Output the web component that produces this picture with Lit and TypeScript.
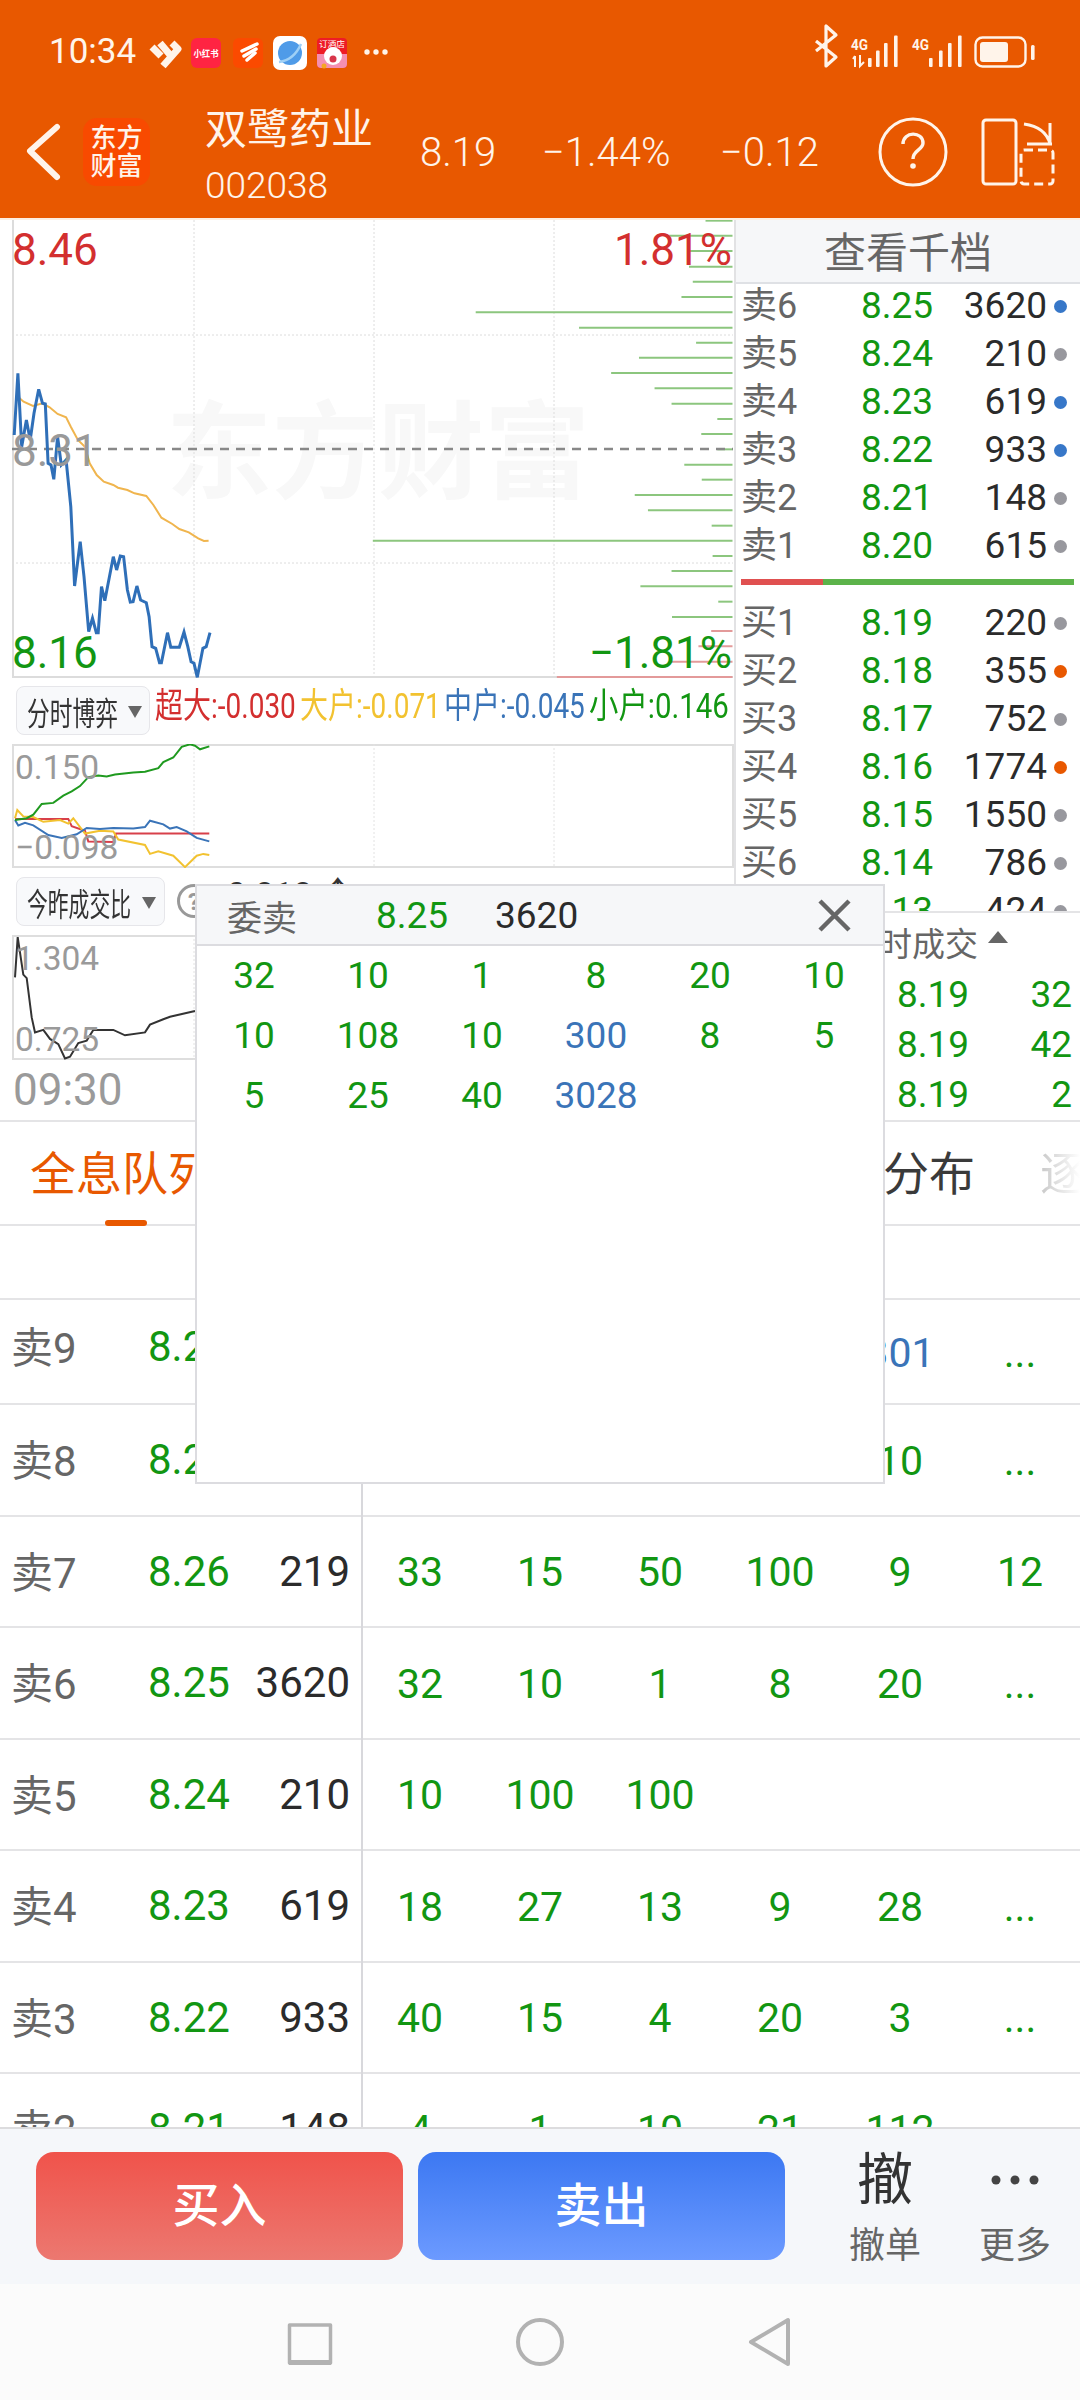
import { LitElement, html, css, svg } from "lit";
import { customElement } from "lit/decorators.js";

type Pt = [number, number];

// traced off the reference crops, each scaled into its chart's own box
const trace = (pts: Pt[], sx: number, sy: number, oy: number) =>
  pts.map(([x, y]) => `${(x / sx - 12).toFixed(1)},${(y / sy + oy).toFixed(1)}`).join(" ");

const BLUE_PRICE: Pt[] = [[30,645],[38,460],[46,680],[56,600],[64,660],[72,580],[82,508],[90,550],[96,552],[102,730],[108,735],[114,778],[122,650],[130,735],[140,720],[150,860],[158,1098],[170,965],[178,1070],[188,1235],[196,1195],[204,1238],[208,1238],[215,1100],[222,1142],[240,1010],[247,1050],[255,1008],[262,1010],[270,1110],[276,1146],[282,1145],[290,1098],[298,1140],[310,1148],[316,1190],[322,1280],[330,1285],[338,1328],[342,1328],[355,1238],[362,1282],[380,1282],[390,1236],[398,1280],[405,1325],[411,1330],[418,1372],[430,1285],[437,1280],[445,1238]];
const AVG_PRICE: Pt[] = [[38,530],[50,545],[70,558],[90,550],[105,562],[122,582],[140,592],[150,620],[165,660],[180,680],[190,730],[205,765],[220,785],[240,795],[250,803],[270,810],[285,820],[310,828],[325,855],[342,893],[365,912],[380,927],[400,937],[420,955],[432,963],[442,962]];
// [y, left edge] of the volume-at-price bars
const BARS: Pt[] = [[2,1495],[47,1418],[93,1460],[140,1460],[185,1468],[231,1444],[277,1008],[323,1227],[368,1475],[413,1354],[459,1295],[505,1387],[551,1423],[597,1520],[642,1486],[688,1520],[734,1450],[779,1487],[825,1345],[871,1373],[917,1508],[962,790],[1008,1510],[1053,1423],[1099,1357],[1145,1522],[1191,1424]];
const RED_BARS: Pt[] = [[1236,1507],[1282,1480],[1328,1420],[1374,1180]];

const FLOW_GREEN: Pt[] = [[45,420],[80,415],[100,405],[125,375],[160,372],[190,352],[215,340],[240,325],[265,300],[295,295],[320,298],[345,293],[400,287],[435,285],[475,275],[490,258],[520,245],[545,215],[570,208],[585,212],[600,222],[628,214]];
const FLOW_BLUE: Pt[] = [[45,420],[55,435],[75,428],[100,435],[145,462],[185,470],[230,460],[260,442],[300,445],[340,442],[400,444],[435,440],[450,422],[490,432],[510,444],[530,440],[560,452],[590,470],[628,480]];
const FLOW_RED: Pt[] = [[45,417],[205,417],[215,437],[255,450],[265,480],[340,482],[348,458],[628,458]];
const FLOW_YELLOW: Pt[] = [[45,415],[52,392],[70,410],[100,412],[130,425],[180,420],[205,430],[220,415],[255,458],[300,450],[340,452],[355,475],[435,490],[450,515],[475,508],[520,520],[555,552],[590,520],[610,515],[628,518]];
const RATIO: Pt[] = [[45,858],[53,745],[70,850],[80,860],[95,970],[105,1012],[130,1005],[150,1030],[175,1045],[195,1085],[210,1080],[235,1042],[260,1035],[280,1005],[340,1005],[375,1020],[435,1012],[450,990],[490,975],[510,968],[585,952]];

const SELL = [
  ["卖6", "8.25", "3620", "blue"],
  ["卖5", "8.24", "210", "gray"],
  ["卖4", "8.23", "619", "blue"],
  ["卖3", "8.22", "933", "blue"],
  ["卖2", "8.21", "148", "gray"],
  ["卖1", "8.20", "615", "gray"],
];
const BUY = [
  ["买1", "8.19", "220", "gray"],
  ["买2", "8.18", "355", "orange"],
  ["买3", "8.17", "752", "gray"],
  ["买4", "8.16", "1774", "orange"],
  ["买5", "8.15", "1550", "gray"],
  ["买6", "8.14", "786", "gray"],
  ["买7", "8.13", "424", "gray"],
];
const TRADES = [["8.19", "32"], ["8.19", "42"], ["8.19", "2"]];
const QUEUE: { l: string; p: string; v: string; q: string[] }[] = [
  { l: "卖9", p: "8.28", v: "3401", q: ["", "", "", "", "301", "..."] },
  { l: "卖8", p: "8.27", v: "512", q: ["", "", "", "", "10", "..."] },
  { l: "卖7", p: "8.26", v: "219", q: ["33", "15", "50", "100", "9", "12"] },
  { l: "卖6", p: "8.25", v: "3620", q: ["32", "10", "1", "8", "20", "..."] },
  { l: "卖5", p: "8.24", v: "210", q: ["10", "100", "100"] },
  { l: "卖4", p: "8.23", v: "619", q: ["18", "27", "13", "9", "28", "..."] },
  { l: "卖3", p: "8.22", v: "933", q: ["40", "15", "4", "20", "3", "..."] },
  { l: "卖2", p: "8.21", v: "148", q: ["4", "1", "10", "21", "112", "..."] },
];
const POPUP = ["32", "10", "1", "8", "20", "10", "10", "108", "10", "300", "8", "5", "5", "25", "40", "3028"];

@customElement("app-root")
export class AppRoot extends LitElement {
  static styles = css`
    :host {
      display: block;
      position: relative;
      width: 1080px;
      height: 2400px;
      overflow: hidden;
      background: #fff;
      font-family: Roboto, "Noto Sans CJK SC", sans-serif;
      color: #2b2b2b;
    }
    .page {
      display: flex;
      flex-direction: column;
      height: 2400px;
    }
    svg {
      display: block;
    }

    /* orange header */
    .head {
      flex: none;
      height: 218px;
      background: #e85800;
      border-bottom: 2px solid #fdeee3;
      color: #fff4ea;
    }
    .status {
      display: flex;
      align-items: center;
      height: 60px;
      padding: 22px 0 18px;
    }
    .time {
      width: 99px;
      padding-left: 49px;
      font-size: 35px;
      line-height: 60px;
    }
    .status .right {
      margin-left: auto;
    }
    .bar {
      display: flex;
      align-items: center;
      height: 104px;
    }
    .back {
      margin-left: 26px;
    }
    .logo {
      width: 67px;
      height: 68px;
      margin-left: 22px;
      border-radius: 14px;
      background: #f84a00;
      font-size: 26px;
      font-weight: 500;
      line-height: 28px;
      text-align: center;
      padding-top: 6px;
      box-sizing: border-box;
    }
    .name {
      width: 215px;
      margin-left: 55px;
      margin-top: 12px;
    }
    .name b {
      display: block;
      font-size: 42px;
      font-weight: 400;
      line-height: 56px;
    }
    .name span {
      display: block;
      font-size: 37px;
      line-height: 56px;
      font-weight: 300;
    }
    .quote {
      font-size: 40px;
      font-weight: 300;
    }
    .q1 {
      width: 122px;
    }
    .q2 {
      width: 178px;
    }
    .q3 {
      width: 157px;
    }
    .help {
      margin-left: 1px;
    }
    .flip {
      margin-left: 33px;
    }

    /* chart + order book */
    .top {
      flex: none;
      display: flex;
      height: 900px;
    }
    .left {
      width: 734px;
      flex: none;
    }
    .chart {
      margin-left: 12px;
    }
    .tool {
      display: flex;
      align-items: flex-start;
      height: 58px;
      padding: 8px 0 0 16px;
    }
    .tool.second {
      height: 58px;
      padding-top: 9px;
    }
    .pick {
      flex: none;
      display: flex;
      align-items: center;
      box-sizing: border-box;
      height: 49px;
      padding-left: 10px;
      border: 1px solid #e6e6ea;
      border-radius: 8px;
      background: #f8f9fb;
      font-size: 32px;
      color: #333;
    }
    .squeeze {
      display: inline-block;
      white-space: nowrap;
      transform-origin: left center;
    }
    .pick .squeeze {
      transform: scaleX(0.71);
    }
    .p1 {
      width: 134px;
    }
    .p1 .label {
      width: 91px;
    }
    .p2 {
      width: 149px;
    }
    .p2 .label {
      width: 105px;
    }
    .p2 .squeeze {
      transform: scaleX(0.65);
    }
    .caret {
      width: 0;
      height: 0;
      margin-left: 10px;
      margin-top: 2px;
      border-left: 7px solid transparent;
      border-right: 7px solid transparent;
      border-top: 12px solid #666;
    }
    .legend {
      display: flex;
      gap: 4.5px;
      margin-left: 5px;
      margin-top: -2px;
    }
    .legend span {
      width: 140px;
      font-size: 35px;
      line-height: 46px;
    }
    .legend .squeeze {
      transform: scaleX(0.8);
    }
    .legend .wide {
      transform: scaleX(0.84);
    }
    .red {
      color: #d32f2f;
    }
    .yellow {
      color: #f2c230;
    }
    .blue {
      color: #3a74b8;
    }
    .green {
      color: #129612;
    }
    .mark {
      margin-left: 12px;
      margin-top: 7px;
      flex: none;
    }
    .ratio {
      margin-left: 16px;
      margin-top: -1px;
      font-size: 34px;
      line-height: 36px;
      color: #333;
      white-space: nowrap;
    }
    .clock {
      padding-left: 13px;
      font-size: 44px;
      line-height: 60px;
      color: #9a9a9a;
    }

    .book {
      flex: 1;
      display: flex;
      flex-direction: column;
      min-width: 0;
      border-left: 2px solid #e2e2e4;
    }
    .book-head {
      flex: none;
      box-sizing: border-box;
      height: 64px;
      padding-top: 6px;
      background: #f6f7f9;
      border-bottom: 2px solid #dfe1e5;
      font-size: 42px;
      line-height: 56px;
      text-align: center;
      color: #666;
    }
    .orders {
      flex: 1;
      min-height: 0;
      overflow: hidden;
    }
    .order {
      display: grid;
      grid-template-columns: 120px 100px 86px 26px;
      align-items: center;
      box-sizing: border-box;
      height: 48px;
      padding: 0 0 4px 5px;
      font-size: 37px;
      line-height: 42px;
    }
    .order .l {
      font-size: 36px;
      color: #666;
    }
    .order .p {
      color: #129612;
    }
    .order .v {
      text-align: right;
    }
    .dot {
      justify-self: center;
      width: 13px;
      height: 13px;
      border-radius: 50%;
    }
    .dot.gray {
      background: #98989e;
    }
    .dot.blue {
      background: #3777c8;
    }
    .dot.orange {
      background: #e85800;
    }
    .split {
      display: flex;
      height: 6px;
      margin: 7px 6px 16px 5px;
      background: #5cb34a;
    }
    .split i {
      width: 82px;
      background: #e05050;
    }
    .trades {
      flex: none;
      height: 209px;
      box-sizing: border-box;
      border-top: 2px solid #e4e4e6;
    }
    .trades-head {
      display: flex;
      align-items: center;
      justify-content: flex-end;
      height: 57px;
      padding-right: 102px;
      font-size: 33px;
      color: #666;
      position: relative;
    }
    .trades-head i {
      position: absolute;
      right: 72px;
      top: 18px;
      width: 0;
      height: 0;
      border-left: 10px solid transparent;
      border-right: 10px solid transparent;
      border-bottom: 12px solid #666;
    }
    .trade {
      display: flex;
      justify-content: space-between;
      height: 50px;
      padding: 0 8px 0 161px;
      font-size: 37px;
      line-height: 50px;
      color: #129612;
    }

    /* tabs */
    .tabs {
      flex: none;
      display: flex;
      gap: 65px;
      box-sizing: border-box;
      height: 106px;
      padding-left: 30px;
      border-top: 2px solid #e4e4e6;
      border-bottom: 2px solid #e4e4e6;
      font-size: 46px;
      line-height: 104px;
      color: #3a3a3a;
      white-space: nowrap;
    }
    .tab {
      position: relative;
      flex: none;
    }
    .tab.on {
      color: #e85800;
      margin-right: 512px;
    }
    .tab.on::after {
      content: "";
      position: absolute;
      left: 75px;
      bottom: -2px;
      width: 42px;
      height: 6px;
      border-radius: 3px;
      background: #e85800;
    }
    .tab.fade {
      background: linear-gradient(90deg, #c8c8c8, #fff 40px);
      -webkit-background-clip: text;
      background-clip: text;
      color: transparent;
    }

    /* queue table */
    .table {
      flex: 1;
      min-height: 0;
      overflow: hidden;
    }
    .thead {
      height: 72px;
      border-bottom: 2px solid #e4e4e6;
    }
    .row {
      display: grid;
      grid-template-columns: 137px 100px 102px 11px 720px;
      align-items: center;
      box-sizing: border-box;
      height: 111.5px;
      padding-left: 11px;
      border-bottom: 2px solid #e4e4e6;
      font-size: 41px;
    }
    .row.first {
      height: 105px;
    }
    .row.first > span {
      position: relative;
      top: -5px;
    }
    .row .l {
      position: relative;
      top: -2px;
      font-size: 42px;
      color: #666;
    }
    .row.first .l {
      top: -7px;
    }
    .row .p {
      font-size: 42px;
      color: #129612;
    }
    .row .v {
      font-size: 42px;
      text-align: right;
    }
    .queue {
      grid-column: 5;
      align-self: stretch;
      display: grid;
      grid-template-columns: repeat(6, 120px);
      align-items: center;
      margin-bottom: -2px;
      border-left: 2px solid #d8d8dc;
      text-align: center;
      color: #129612;
      text-indent: -6px;
    }
    .queue .big,
    .cells .big {
      color: #3a74b8;
    }

    /* trade buttons */
    .actions {
      flex: none;
      display: flex;
      box-sizing: border-box;
      height: 157px;
      padding: 23px 0 0 36px;
      border-top: 2px solid #dcdcde;
      background: #f5f7fa;
    }
    .btn {
      flex: none;
      width: 367px;
      height: 108px;
      margin-right: 15px;
      border-radius: 18px;
      font-size: 47px;
      font-weight: 500;
      line-height: 108px;
      text-align: center;
      color: #fff;
    }
    .buy {
      background: linear-gradient(#f0534b, #ec7870);
    }
    .sell {
      background: linear-gradient(#3c78f2, #6c9aff);
    }
    .cmd {
      flex: none;
      width: 130px;
      margin-top: -21px;
      text-align: center;
      font-size: 36px;
      line-height: 34px;
      color: #666;
    }
    .cmd.undo {
      margin-left: 20px;
    }
    .cmd b,
    .cmd .more {
      display: flex;
      align-items: center;
      justify-content: center;
      height: 98px;
      font-size: 56px;
      font-weight: 400;
      color: #333;
    }

    /* android nav */
    .nav {
      flex: none;
      display: flex;
      align-items: center;
      justify-content: center;
      gap: 170px;
      height: 116px;
      background: #fbfbfb;
    }

    /* volume detail popup */
    .popup {
      position: absolute;
      left: 195px;
      top: 884px;
      width: 690px;
      height: 600px;
      box-sizing: border-box;
      border: 2px solid #dcdce0;
      background: #fff;
      font-size: 37px;
    }
    .popup-head {
      display: grid;
      grid-template-columns: 149px 119px 1fr auto;
      align-items: center;
      box-sizing: border-box;
      height: 60px;
      padding: 0 32px 0 30px;
      background: #f6f7f9;
      border-bottom: 2px solid #dcdce0;
    }
    .popup-head .l {
      font-size: 35px;
      color: #666;
    }
    .popup-head .p {
      color: #129612;
    }
    .cells {
      display: grid;
      grid-template-columns: repeat(6, 114px);
      grid-auto-rows: 60px;
      align-items: center;
      margin-top: -1px;
      text-align: center;
      color: #129612;
    }
  `;

  private chart1() {
    const sx = 2.119;
    return html`<svg class="chart" width="723" height="458" viewBox="0 0 723 458">
      <text x="154" y="270" font-size="106" font-weight="700" fill="#f8f8f8" textLength="424">东方财富</text>
      <g stroke="#dcdcdc" stroke-width="1" stroke-dasharray="2 2">
        <line x1="0" x2="721" y1="115" y2="115"></line>
        <line x1="0" x2="721" y1="343" y2="343"></line>
        <line x1="182" x2="182" y1="0" y2="458"></line>
        <line x1="362" x2="362" y1="0" y2="458"></line>
        <line x1="542" x2="542" y1="0" y2="458"></line>
      </g>
      <path d="M1 0V457H721" fill="none" stroke="#dcdcdc" stroke-width="2"></path>
      ${BARS.map(
        ([y, x]) => svg`<line x1=${x / sx - 12} x2="720.5" y1=${y / 3} y2=${y / 3} stroke="#8cc67e" stroke-width="2"></line>`
      )}
      ${RED_BARS.map(
        ([y, x]) => svg`<line x1=${x / sx - 12} x2="720.5" y1=${y / 3 - 1} y2=${y / 3 - 1} stroke="#e39a9a" stroke-width="2"></line>`
      )}
      <line x1="0" x2="721" y1="229" y2="229" stroke="#888" stroke-width="2.5" stroke-dasharray="9 7"></line>
      <polyline points=${trace(AVG_PRICE, sx, 3, 0)} fill="none" stroke="#f0b54e" stroke-width="2"></polyline>
      <polyline points=${trace(BLUE_PRICE, sx, 3, 0)} fill="none" stroke="#2f6fb8" stroke-width="3"></polyline>
      <g font-size="44">
        <text x="0" y="45" fill="#d32f2f">8.46</text>
        <text x="0" y="246" fill="#999">8.31</text>
        <text x="0" y="448" fill="#129612">8.16</text>
        <text x="720" y="45" fill="#d32f2f" text-anchor="end">1.81%</text>
        <text x="720" y="448" fill="#129612" text-anchor="end">−1.81%</text>
      </g>
    </svg>`;
  }

  private frame(h: number) {
    return svg`
      <rect x="1" y="1" width="720" height=${h - 2} fill="none" stroke="#dedede" stroke-width="2"></rect>
      <g stroke="#e2e2e2" stroke-dasharray="2 2">
        <line x1="182" x2="182" y1="0" y2=${h}></line>
        <line x1="362" x2="362" y1="0" y2=${h}></line>
        <line x1="542" x2="542" y1="0" y2=${h}></line>
      </g>`;
  }

  private chart2() {
    // crop origin y 670, chart top y 744
    const oy = 670 - 744;
    return html`<svg class="chart" width="723" height="124" viewBox="0 0 723 124">
      ${this.frame(124)}
      <polyline points=${trace(FLOW_RED, 3, 2.8, oy)} fill="none" stroke="#d8404a" stroke-width="2"></polyline>
      <polyline points=${trace(FLOW_YELLOW, 3, 2.8, oy)} fill="none" stroke="#f2c230" stroke-width="2"></polyline>
      <polyline points=${trace(FLOW_BLUE, 3, 2.8, oy)} fill="none" stroke="#3a74b8" stroke-width="2"></polyline>
      <polyline points=${trace(FLOW_GREEN, 3, 2.8, oy)} fill="none" stroke="#1f9a1f" stroke-width="2"></polyline>
      <g font-size="33.5" fill="#9a9a9a">
        <text x="3" y="35">0.150</text>
        <text x="3" y="115">−0.098</text>
      </g>
    </svg>`;
  }

  private chart3() {
    const oy = 670 - 934;
    return html`<svg class="chart" width="723" height="125" viewBox="0 0 723 125">
      ${this.frame(125)}
      <polyline points=${trace(RATIO, 3, 2.8, oy)} fill="none" stroke="#333" stroke-width="2"></polyline>
      <g font-size="33.5" fill="#9a9a9a">
        <text x="3" y="35">1.304</text>
        <text x="3" y="116">0.725</text>
      </g>
    </svg>`;
  }

  private statusLeft() {
    return html`<svg width="250" height="60" viewBox="0 0 250 60">
      <g fill="none" stroke="#fff4ea" stroke-width="7" stroke-linejoin="round">
        <path d="M4 25 L13 34"></path>
        <path d="M12 21 L23 34"></path>
        <path d="M24 21 L30 27 L15 44"></path>
      </g>
      <rect x="43" y="16" width="30" height="30" rx="6" fill="#ff2442"></rect>
      <text x="58" y="35" font-size="9.5" font-weight="700" fill="#fff" text-anchor="middle" textLength="25" lengthAdjust="spacingAndGlyphs">小红书</text>
      <rect x="85" y="16" width="30" height="30" rx="6" fill="#fb4a00"></rect>
      <g fill="none" stroke="#fff" stroke-width="3.5" stroke-linecap="round">
        <path d="M94 29 L109 22"></path>
        <path d="M96 34 L108 27"></path>
        <path d="M99 38 L107 31"></path>
      </g>
      <rect x="125" y="14" width="34" height="34" rx="7" fill="#fff"></rect>
      <circle cx="142" cy="31" r="12" fill="#4f9be8"></circle>
      <path d="M131 40 Q146 38 153 22" fill="none" stroke="#9fd0f6" stroke-width="2.5"></path>
      <rect x="169" y="16" width="30" height="30" rx="4" fill="#ee1c25"></rect>
      <text x="184" y="25" font-size="8.5" fill="#fff" text-anchor="middle" textLength="26" lengthAdjust="spacingAndGlyphs">订酒店</text>
      <path d="M169 32 H199 V42 Q199 46 195 46 H173 Q169 46 169 42Z" fill="#f48fb1"></path>
      <circle cx="185" cy="34" r="9" fill="#fff"></circle>
      <circle cx="185" cy="37" r="3.5" fill="#d8364a"></circle>
      <circle cx="176" cy="44" r="2.5" fill="#f5a623"></circle>
      <g fill="#fff4ea">
        <circle cx="219" cy="30" r="2.7"></circle>
        <circle cx="228" cy="30" r="2.7"></circle>
        <circle cx="237" cy="30" r="2.7"></circle>
      </g>
    </svg>`;
  }

  private statusRight() {
    const bars = (xs: number[]) =>
      xs.map((x, i) => {
        const h = 9 + i * 7.5;
        return svg`<rect x=${x} y=${45 - h} width="3.6" height=${h} rx="1" fill="#fff4ea"></rect>`;
      });
    return html`<svg class="right" width="280" height="60" viewBox="0 0 280 60">
      <path d="M16 29 L36 13 L26 4 V44 L36 35 L16 19" fill="none" stroke="#fff4ea" stroke-width="3.2" stroke-linejoin="round"></path>
      <g font-size="15" font-weight="700" fill="#fff4ea">
        <text x="51" y="28" textLength="17" lengthAdjust="spacingAndGlyphs">4G</text>
        <text x="112" y="28" textLength="17" lengthAdjust="spacingAndGlyphs">4G</text>
      </g>
      <path d="M55 34 V45 M53 37 L55 34 M60 33 V44 L64 40" fill="none" stroke="#fff4ea" stroke-width="2"></path>
      ${bars([68, 76, 84, 94])}
      ${bars([129, 139, 148, 158])}
      <rect x="175.5" y="15.5" width="50" height="29" rx="7" fill="none" stroke="#fff4ea" stroke-width="2.4"></rect>
      <rect x="180" y="20" width="28" height="20" rx="3" fill="#fff4ea"></rect>
      <rect x="231" y="23" width="3.6" height="15" rx="1.5" fill="#fff4ea"></rect>
    </svg>`;
  }

  private header() {
    return html`<header class="head">
      <div class="status">
        <span class="time">10:34</span>
        ${this.statusLeft()} ${this.statusRight()}
      </div>
      <div class="bar">
        <svg class="back" width="35" height="58" viewBox="0 0 35 58">
          <path d="M31 4 L4 28 L31 54" fill="none" stroke="#fff4ea" stroke-width="6" stroke-linecap="round" stroke-linejoin="round"></path>
        </svg>
        <div class="logo">东方<br />财富</div>
        <div class="name"><b>双鹭药业</b><span>002038</span></div>
        <span class="quote q1">8.19</span>
        <span class="quote q2">−1.44%</span>
        <span class="quote q3">−0.12</span>
        <svg class="help" width="70" height="70" viewBox="0 0 70 70">
          <circle cx="35" cy="35" r="33" fill="none" stroke="#fff4ea" stroke-width="3"></circle>
          <path d="M25 27 C25 14 45 14 45 26 C45 33 35 33 35 42" fill="none" stroke="#fff4ea" stroke-width="3.4"></path>
          <circle cx="35" cy="49" r="2.8" fill="#fff4ea"></circle>
        </svg>
        <svg class="flip" width="74" height="68" viewBox="0 0 74 68">
          <rect x="2" y="2" width="33" height="64" rx="3" fill="none" stroke="#fff4ea" stroke-width="3"></rect>
          <rect x="40" y="32" width="32" height="34" rx="3" fill="none" stroke="#fff4ea" stroke-width="3" stroke-dasharray="9 5"></rect>
          <path d="M43 6 C57 8 66 14 69 26 M46 26 H71 M69 5 V26" fill="none" stroke="#fff4ea" stroke-width="3"></path>
        </svg>
      </div>
    </header>`;
  }

  private order(o: string[]) {
    return html`<div class="order">
      <span class="l">${o[0]}</span>
      <span class="p">${o[1]}</span>
      <span class="v">${o[2]}</span>
      <i class="dot ${o[3]}"></i>
    </div>`;
  }

  private book() {
    return html`<aside class="book">
      <div class="book-head">查看千档</div>
      <div class="orders">
        ${SELL.map((o) => this.order(o))}
        <div class="split"><i></i></div>
        ${BUY.map((o) => this.order(o))}
      </div>
      <div class="trades">
        <div class="trades-head"><span>分时成交</span><i></i></div>
        ${TRADES.map((t) => html`<div class="trade"><span>${t[0]}</span><span>${t[1]}</span></div>`)}
      </div>
    </aside>`;
  }

  private rows() {
    return QUEUE.map(
      (r, i) => html`<div class="row ${i === 0 ? "first" : ""}">
        <span class="l">${r.l}</span>
        <span class="p">${r.p}</span>
        <span class="v">${r.v}</span>
        <div class="queue">
          ${r.q.map((c) => html`<span class=${Number(c) >= 300 ? "big" : ""}>${c}</span>`)}
        </div>
      </div>`
    );
  }

  render() {
    return html`<div class="page">
        ${this.header()}
        <section class="top">
          <div class="left">
            ${this.chart1()}
            <div class="tool">
              <div class="pick p1"><span class="label"><span class="squeeze">分时博弈</span></span><i class="caret"></i></div>
              <div class="legend">
                <span class="red"><span class="squeeze">超大:-0.030</span></span>
                <span class="yellow"><span class="squeeze">大户:-0.071</span></span>
                <span class="blue"><span class="squeeze">中户:-0.045</span></span>
                <span class="green"><span class="squeeze wide">小户:0.146</span></span>
              </div>
            </div>
            ${this.chart2()}
            <div class="tool second">
              <div class="pick p2"><span class="label"><span class="squeeze">今昨成交比</span></span><i class="caret"></i></div>
              <svg class="mark" width="34" height="34" viewBox="0 0 34 34">
                <circle cx="17" cy="17" r="15.5" fill="none" stroke="#999" stroke-width="3"></circle>
                <text x="17" y="26" font-size="24" font-weight="700" fill="#999" text-anchor="middle">?</text>
              </svg>
              <span class="ratio">0.818 ↑</span>
            </div>
            ${this.chart3()}
            <div class="clock">09:30</div>
          </div>
          ${this.book()}
        </section>
        <nav class="tabs">
          <span class="tab on">全息队列</span>
          <span class="tab">成交分布</span>
          <span class="tab fade">逐笔</span>
        </nav>
        <div class="table">
          <div class="thead"></div>
          ${this.rows()}
        </div>
        <div class="actions">
          <div class="btn buy">买入</div>
          <div class="btn sell">卖出</div>
          <div class="cmd undo"><b>撤</b>撤单</div>
          <div class="cmd">
            <div class="more">
              <svg width="48" height="10" viewBox="0 0 48 10" fill="#444">
                <circle cx="5" cy="5" r="4.5"></circle>
                <circle cx="24" cy="5" r="4.5"></circle>
                <circle cx="43" cy="5" r="4.5"></circle>
              </svg>
            </div>
            更多
          </div>
        </div>
        <div class="nav">
          <svg width="60" height="60" viewBox="0 0 60 60">
            <path d="M9.5 13 H50.5 V51 H9.5 Z" fill="none" stroke="#b2b2b2" stroke-width="3.5" stroke-linejoin="round"></path>
            <path d="M9 50.5 H51" stroke="#b2b2b2" stroke-width="5"></path>
          </svg>
          <svg width="60" height="60" viewBox="0 0 60 60">
            <circle cx="30" cy="30" r="22" fill="none" stroke="#b2b2b2" stroke-width="4"></circle>
          </svg>
          <svg width="60" height="60" viewBox="0 0 60 60">
            <path d="M48 8 V52 L11 30 Z" fill="none" stroke="#b2b2b2" stroke-width="4" stroke-linejoin="round"></path>
          </svg>
        </div>
      </div>
      <div class="popup">
        <div class="popup-head">
          <span class="l">委卖</span>
          <span class="p">8.25</span>
          <span>3620</span>
          <svg width="33" height="33" viewBox="0 0 33 33">
            <path d="M2 2 L31 31 M31 2 L2 31" stroke="#666" stroke-width="4.5" fill="none"></path>
          </svg>
        </div>
        <div class="cells">
          ${POPUP.map((c) => html`<span class=${Number(c) >= 300 ? "big" : ""}>${c}</span>`)}
        </div>
      </div>`;
  }
}
